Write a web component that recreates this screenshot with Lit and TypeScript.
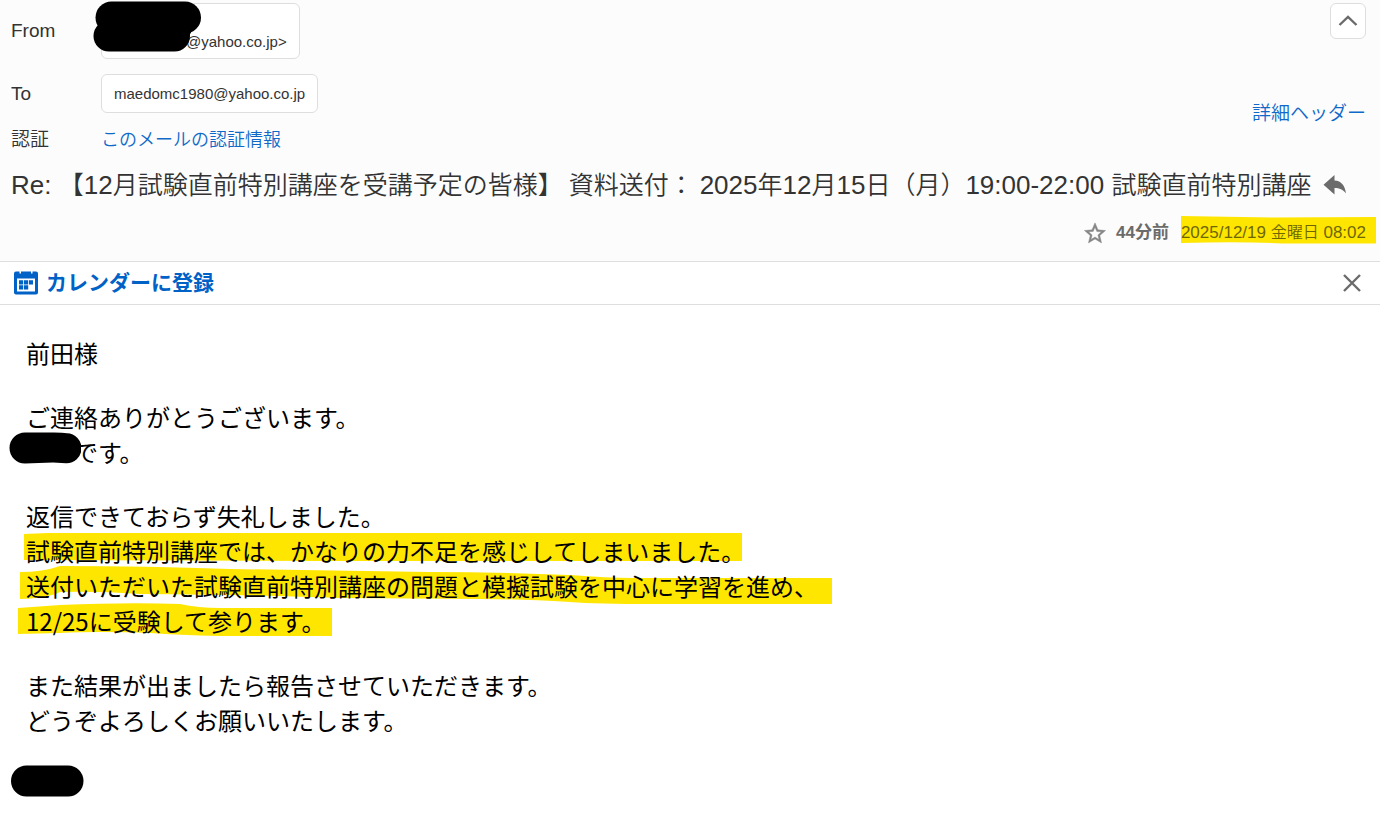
import { LitElement, html, css } from "lit";
import { customElement } from "lit/decorators.js";

@customElement("app-root")
export class AppRoot extends LitElement {
  static styles = css`
    :host {
      display: block;
      min-height: 100vh;
      background: #fff;
      color: #000;
      font-family: "Liberation Sans", "Noto Sans CJK JP", sans-serif;
    }
    * { box-sizing: border-box; }
    a { color: #0f69c9; text-decoration: none; }
    button {
      display: grid;
      place-items: center;
      padding: 0;
      border: 0;
      background: none;
      font: inherit;
      color: #6b6b6b;
      cursor: pointer;
    }
    svg { display: block; }
    .head {
      margin-right: 1px;
      padding: 3px 14px 16px 11px;
      background: #fcfcfc;
      border-bottom: 1px solid #dedede;
      color: #333;
      font-weight: 350;
    }
    .top { display: flex; justify-content: space-between; }
    .fields {
      display: grid;
      grid-template-columns: 90px auto;
      align-items: center;
      margin: 0;
      font-size: 19px;
      line-height: 26px;
    }
    .fields dt { margin: 0; }
    .fields dd { margin: 0; }
    .fields .to { margin: 15px 0 14px; }
    .chip {
      position: relative;
      display: inline-flex;
      align-items: center;
      height: 39px;
      padding: 0 12px;
      border: 1px solid #dedede;
      border-radius: 6px;
      background: #fff;
      font-size: 15px;
      line-height: 20px;
      vertical-align: top;
    }
    .chip.tall {
      align-items: flex-end;
      height: 56px;
      padding: 0 12px 6px 84px;
    }
    .auth { font-size: 18px; }
    .side {
      display: flex;
      flex-direction: column;
      align-items: flex-end;
      justify-content: space-between;
      padding-bottom: 26px;
      font-size: 19px;
      line-height: 26px;
    }
    .fold {
      width: 36px;
      height: 36px;
      border: 1px solid #dedede;
      border-radius: 6px;
      background: #fff;
    }
    .subject { display: flex; align-items: center; gap: 12px; margin-top: 16px; }
    h1 { margin: 0; font-size: 25px; line-height: 32px; font-weight: 350; }
    h1 .part { margin-right: 6px; }
    h1 .num { font-size: 26px; }
    .meta {
      display: flex;
      align-items: center;
      justify-content: flex-end;
      margin-top: 20px;
      font-size: 17px;
      line-height: 24px;
      color: #6b6b6b;
    }
    .meta b { margin: 0 12px 0 10px; font-weight: 700; }
    .stamp { position: relative; z-index: 0; color: #6e6600; }
    .stamp .week { font-size: 16px; }
    .mark { position: absolute; z-index: -1; fill: #ffe600; }
    .mark.day { left: 0; top: -5px; width: calc(100% + 10px); height: 28px; }
    .mark.lines { left: -8px; top: 35px; }
    .ink { position: absolute; fill: #000; }
    .ink.sender { left: -9px; top: -3px; }
    .ink.name { left: -17px; top: -6px; }
    .ink.sign { left: -15px; top: -5px; }
    .bar {
      display: flex;
      align-items: center;
      justify-content: space-between;
      height: 43px;
      margin-right: 1px;
      padding: 0 19px 0 14px;
      border-bottom: 1px solid #dedede;
    }
    .bar a {
      display: flex;
      align-items: center;
      gap: 8px;
      font-size: 21px;
      line-height: 30px;
      font-weight: 700;
      color: #0061c6;
    }
    .body {
      padding: 30px 26px 0;
      font-family: "Noto Sans CJK JP", sans-serif;
      font-size: 24px;
      line-height: 35px;
    }
    .body p { position: relative; z-index: 0; margin: 0 0 29px; }
    .body p:last-child { margin-bottom: 0; }
    .hidden { position: relative; display: inline-block; width: 48px; height: 24px; }
  `;

  render() {
    return html`
      <header class="head">
        <div class="top">
          <dl class="fields">
            <dt>From</dt>
            <dd>
              <span class="chip tall">@yahoo.co.jp&gt;
                <svg class="ink sender" width="108" height="52" viewBox="0 0 108 52" aria-hidden="true">
                  <rect x="2.500" y="0.500" width="105.500" height="32" rx="16" />
                  <rect x="0.500" y="19.500" width="96.500" height="31" rx="15.500" />
                  <path d="M80 25H98V32Q96 33 96 38H80Z" />
                </svg>
              </span>
            </dd>
            <dt class="to">To</dt>
            <dd class="to"><span class="chip">maedomc1980@yahoo.co.jp</span></dd>
            <dt>認証</dt>
            <dd class="auth"><a href="#auth">このメールの認証情報</a></dd>
          </dl>
          <div class="side">
            <button class="fold" type="button" aria-label="ヘッダーを閉じる">
              <svg width="20" height="12" viewBox="0 0 20 12" fill="none" stroke="currentColor" stroke-width="2.4">
                <path d="M1.5 10L10 2L18.5 10" />
              </svg>
            </button>
            <a href="#header">詳細ヘッダー</a>
          </div>
        </div>
        <div class="subject">
          <h1><span class="num">Re: </span><span class="part">【<span class="num">12</span>月試験直前特別講座を受講予定の皆様】</span><span class="part">資料送付：</span><span class="num">2025</span>年<span class="num">12</span>月<span class="num">15</span>日（月）<span class="num">19:00-22:00 </span>試験直前特別講座</h1>
          <button type="button" aria-label="返信">
            <svg width="24" height="20" viewBox="0 0 24 20" fill="currentColor">
              <path d="M11.500 0V5.500C18.500 6 22 10.500 23 18.500C20 14.500 16.500 13 11.500 13V19.500L0.500 9.800Z" />
            </svg>
          </button>
        </div>
        <div class="meta">
          <button type="button" aria-label="スターを付ける">
            <svg width="22" height="22" viewBox="1.6 1.2 20.800 20.800" fill="#868686" stroke="#868686" stroke-width="0.400">
              <path d="M22 9.240l-7.190-.620L12 2 9.190 8.630 2 9.240l5.460 4.730L5.820 21 12 17.270 18.180 21l-1.630-7.030L22 9.240zM12 15.400l-3.760 2.270 1-4.280-3.320-2.880 4.380-.380L12 6.100l1.710 4.040 4.380.380-3.320 2.880 1 4.280L12 15.400z" />
            </svg>
          </button>
          <b>44分前</b>
          <time class="stamp" datetime="2025-12-19T08:02">
            <svg class="mark day" viewBox="0 0 192 28" preserveAspectRatio="none" aria-hidden="true">
              <path d="M0 0Q45 1 90 1.500L192 1V27.500H100Q60 25.500 0 27Z" />
            </svg>2025/12/19 <span class="week">金曜日</span> 08:02</time>
        </div>
      </header>
      <nav class="bar">
        <a href="#calendar">
          <svg width="24" height="24" viewBox="0 0 24 24" aria-hidden="true">
            <path fill="#0061c6" fill-rule="evenodd" d="M2 0.500H5.500V2.500H7V0.500H17V2.500H18.500V0.500H22Q24 0.500 24 2.500V21.500Q24 23.500 22 23.500H2Q0 23.500 0 21.500V2.500Q0 0.500 2 0.500ZM3 7.500V20.500H21V7.500Z" />
            <path fill="#0061c6" d="M5 9.200h4.200v4.200h-4.200zM10 9.200h4.200v4.200h-4.200zM15 9.200h4v4.200h-4zM5 14.300h4.200v4.200h-4.200zM10 14.300h4.200v4.200h-4.200z" />
          </svg>
          カレンダーに登録
        </a>
        <button type="button" aria-label="閉じる">
          <svg width="18" height="18" viewBox="0 0 18 18" fill="none" stroke="currentColor" stroke-width="2.400">
            <path d="M1 1L17 17M17 1L1 17" />
          </svg>
        </button>
      </nav>
      <main class="body">
        <p>前田様</p>
        <p>ご連絡ありがとうございます。<br /><span class="hidden"><svg class="ink name" width="72" height="32" viewBox="0 0 72 32" aria-hidden="true"><path d="M16 0.500H45Q54 0.500 58 1.200A15 15 0 0 1 57 31.200L44 30.500L16 31.500A15.500 15.500 0 0 1 16 0.500Z" /></svg></span>です。</p>
        <p>
          <svg class="mark lines" width="816" height="104" viewBox="0 0 816 104" aria-hidden="true">
            <path d="M6 1L30 0H724V28H300L6 27Z" />
            <path d="M2 39Q25 39 42 33Q130 33 212 36L412 39Q480 39 552 42Q590 45 614 45H814V71H632Q580 71 552 69Q500 66 462 66L322 65Q250 62 122 61Q80 58 42 59Q30 65 2 66Z" />
            <path d="M0 75L42 72Q110 69 162 71Q180 75 202 75H314V103H202Q160 102 132 100Q80 98 42 100L0 101Z" />
          </svg>返信できておらず失礼しました。<br />試験直前特別講座では、かなりの力不足を感じしてしまいました。<br />送付いただいた試験直前特別講座の問題と模擬試験を中心に学習を進め、<br />12/25に受験して参ります。
        </p>
        <p>また結果が出ましたら報告させていただきます。<br />どうぞよろしくお願いいたします。</p>
        <p><span class="hidden"><svg class="ink sign" width="73" height="32" viewBox="0 0 73 32" aria-hidden="true"><rect y="0.500" width="72.500" height="31" rx="15.500" /></svg></span></p>
      </main>
    `;
  }
}
